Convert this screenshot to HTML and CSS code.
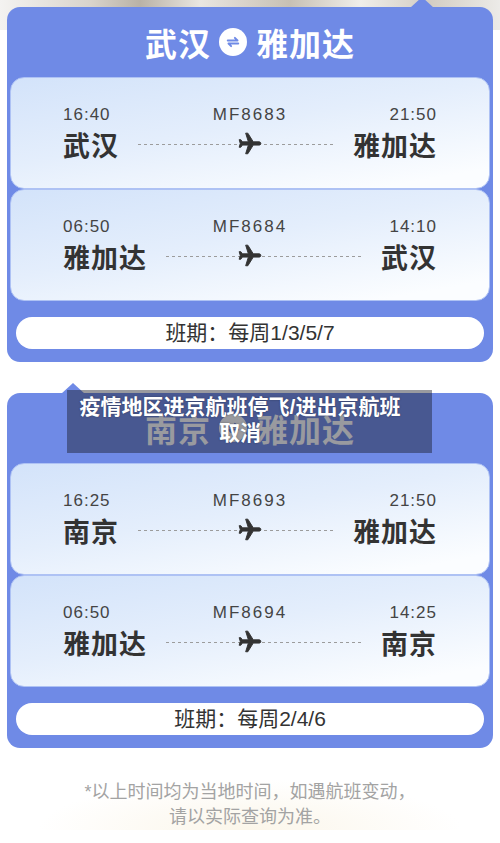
FILE: index.html
```html
<!DOCTYPE html>
<html lang="zh-CN">
<head>
  <meta charset="UTF-8" />
  <meta name="viewport" content="width=device-width, initial-scale=1.0"/>
  <title>航线信息</title>
  <link rel="stylesheet" href="styles.css">
</head>
<body>
  <div class="page">

    <section class="route route-first">
      <h2 class="route-title">
        <span>武汉</span>
        <span class="swap"><svg viewBox="0 0 24 24" width="18" height="18"><path d="M5 10h13l-3.5-3.5M19 14H6l3.5 3.5" /></svg></span>
        <span>雅加达</span>
      </h2>

      <div class="flight">
        <div class="flight-meta"><span>16:40</span><span class="code">MF8683</span><span class="right">21:50</span></div>
        <div class="flight-cities">
          <span class="city">武汉</span><span class="dash"></span><span class="city">雅加达</span>
          <svg class="plane" viewBox="0 0 24 24" width="26" height="26"><path transform="rotate(90 12 12)" d="M21 16v-2l-8-5V3.5c0-.83-.67-1.5-1.5-1.5S10 2.670 10 3.5V9l-8 5v2l8-2.5V19l-2 1.5V22l3.5-1 3.5 1v-1.5L13 19v-5.5l8 2.5z" /></svg>
        </div>
      </div>

      <div class="flight">
        <div class="flight-meta"><span>06:50</span><span class="code">MF8684</span><span class="right">14:10</span></div>
        <div class="flight-cities">
          <span class="city">雅加达</span><span class="dash"></span><span class="city">武汉</span>
          <svg class="plane" viewBox="0 0 24 24" width="26" height="26"><path transform="rotate(90 12 12)" d="M21 16v-2l-8-5V3.5c0-.83-.67-1.5-1.5-1.5S10 2.670 10 3.5V9l-8 5v2l8-2.5V19l-2 1.5V22l3.5-1 3.5 1v-1.5L13 19v-5.5l8 2.5z" /></svg>
        </div>
      </div>

      <div class="schedule">班期：每周1/3/5/7</div>
    </section>

    <section class="route route-second">
      <div class="news-caption">疫情地区进京航班停飞/进出京航班<br>取消</div>

      <h2 class="route-title">
        <span>南京</span>
        <span class="swap"><svg viewBox="0 0 24 24" width="18" height="18"><path d="M5 10h13l-3.5-3.5M19 14H6l3.5 3.5" /></svg></span>
        <span>雅加达</span>
      </h2>

      <div class="flight">
        <div class="flight-meta"><span>16:25</span><span class="code">MF8693</span><span class="right">21:50</span></div>
        <div class="flight-cities">
          <span class="city">南京</span><span class="dash"></span><span class="city">雅加达</span>
          <svg class="plane" viewBox="0 0 24 24" width="26" height="26"><path transform="rotate(90 12 12)" d="M21 16v-2l-8-5V3.5c0-.83-.67-1.5-1.5-1.5S10 2.670 10 3.5V9l-8 5v2l8-2.5V19l-2 1.5V22l3.5-1 3.5 1v-1.5L13 19v-5.5l8 2.5z" /></svg>
        </div>
      </div>

      <div class="flight">
        <div class="flight-meta"><span>06:50</span><span class="code">MF8694</span><span class="right">14:25</span></div>
        <div class="flight-cities">
          <span class="city">雅加达</span><span class="dash"></span><span class="city">南京</span>
          <svg class="plane" viewBox="0 0 24 24" width="26" height="26"><path transform="rotate(90 12 12)" d="M21 16v-2l-8-5V3.5c0-.83-.67-1.5-1.5-1.5S10 2.670 10 3.5V9l-8 5v2l8-2.5V19l-2 1.5V22l3.5-1 3.5 1v-1.5L13 19v-5.5l8 2.5z" /></svg>
        </div>
      </div>

      <div class="schedule">班期：每周2/4/6</div>
    </section>

    <p class="note">*以上时间均为当地时间，如遇航班变动，<br>请以实际查询为准。</p>

  </div>
</body>
</html>
```

FILE: styles.css
```css
body {
  margin: 0;
  font-family: "Liberation Sans", "Noto Sans CJK SC", sans-serif;
  background:
    linear-gradient(90deg, #f4f3f1 0, #d9d4cc 18%, #b9b2a6 28%, #e9e6e1 40%, #c7c0b4 58%, #f0eeea 72%, #d3cdc3 86%, #ecebe8 100%) no-repeat top / 100% 30px,
    radial-gradient(ellipse at 50% 100%, #fbf6ea 0, #ffffff 60%) no-repeat bottom / 100% 60px,
    #ffffff;
}

.page {
  padding: 7px 7px 0;
}

.route {
  position: relative;
  background: #6f8ae6;
  border-radius: 13px;
  padding: 0 3px 13px;
}

.route::before {
  content: "";
  position: absolute;
  top: -10px;
  border-left: 12px solid transparent;
  border-right: 12px solid transparent;
  border-bottom: 11px solid #6f8ae6;
}

.route-first::before {
  left: 403px;
}

.route-second {
  margin-top: 31px;
}

.route-second::before {
  left: 54px;
}

.route-title {
  margin: 0;
  height: 70px;
  display: flex;
  align-items: center;
  justify-content: center;
  color: #fff;
  font-size: 32px;
  font-weight: 700;
  letter-spacing: 1px;
}

.swap {
  width: 28px;
  height: 28px;
  margin: 0 9px 0 8px;
  border-radius: 50%;
  background: #fff;
  display: flex;
  align-items: center;
  justify-content: center;
}

.swap svg {
  fill: none;
  stroke: #6f8ae6;
  stroke-width: 2.6;
  stroke-linecap: round;
  stroke-linejoin: round;
}

.flight {
  height: 112px;
  box-sizing: border-box;
  padding: 25px 52px 0;
  border: 1.5px solid #aec2f4;
  border-radius: 14px;
  background: linear-gradient(170deg, #d3e3fa 0, #e4eefc 45%, #fbfdff 90%);
}

.flight-meta {
  display: grid;
  grid-template-columns: 1fr auto 1fr;
  line-height: 24px;
  font-size: 17px;
  color: #444;
  letter-spacing: 1px;
}

.flight-meta .code {
  letter-spacing: 2px;
}

.flight-meta .right {
  text-align: right;
}

.flight-cities {
  position: relative;
  display: flex;
  align-items: center;
  margin-top: -1px;
  height: 36px;
}

.city {
  font-size: 27px;
  font-weight: 700;
  color: #333;
  letter-spacing: 1px;
}

.dash {
  flex: 1;
  height: 1px;
  margin: 0 19px;
  background: repeating-linear-gradient(90deg, #9c9c9c 0 3px, transparent 3px 6px);
}

.plane {
  position: absolute;
  left: 50%;
  top: 50%;
  transform: translate(-50%, -50%);
  fill: #333;
  stroke: #333;
  stroke-width: 0.9;
  stroke-linejoin: round;
}

.schedule {
  margin: 16px 6px 0;
  height: 32px;
  line-height: 32px;
  border-radius: 16px;
  background: #fff;
  text-align: center;
  font-size: 21px;
  color: #333;
}

.news-caption {
  position: absolute;
  top: -3px;
  left: 60px;
  width: 365px;
  height: 63px;
  box-sizing: border-box;
  padding: 4px 29px 0 10px;
  background: rgba(22, 24, 36, 0.44);
  color: #fff;
  font-size: 21px;
  font-weight: 700;
  line-height: 26px;
  text-align: center;
  white-space: nowrap;
  text-shadow: 0 0 2px rgba(0, 0, 0, 0.35);
  z-index: 2;
}

.note {
  margin: 32px 0 0;
  text-align: center;
  font-size: 18px;
  line-height: 25px;
  color: #a3a3a3;
}
```
